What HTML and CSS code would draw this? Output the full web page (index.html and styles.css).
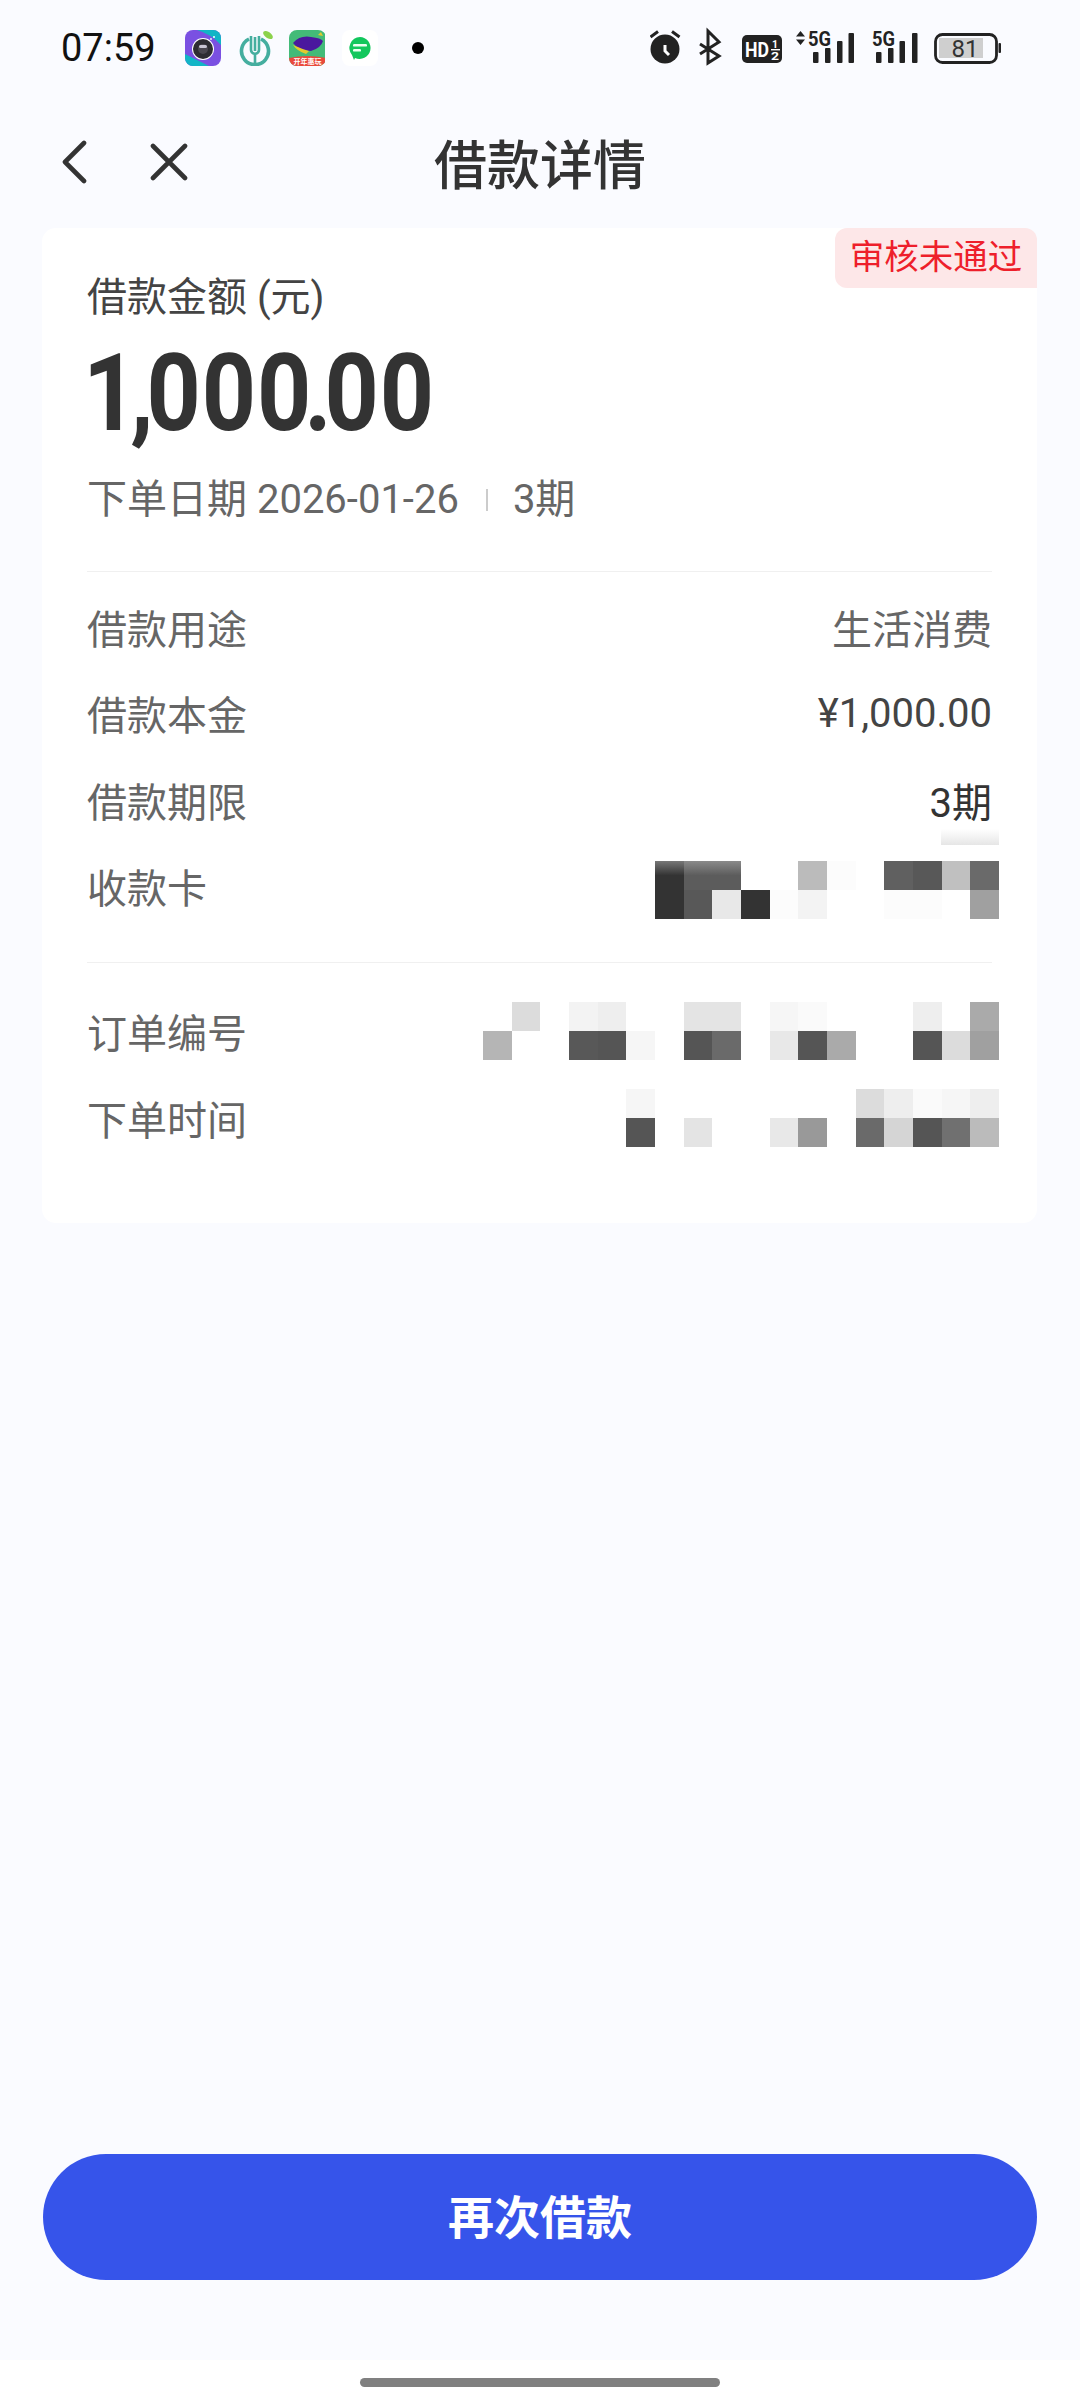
FILE: index.html
```html
<!DOCTYPE html>
<html lang="zh-CN">
<head>
  <meta charset="UTF-8" />
  <meta name="viewport" content="width=device-width, initial-scale=1.0"/>
  <title>借款详情</title>
  <link rel="stylesheet" href="styles.css">
</head>
<body>
  <div class="page">
    <div class="statusbar">
      <span class="time">07:59</span>
      <div class="app-icons">
        <svg class="app" viewBox="0 0 36 36">
          <clipPath id="camClip"><rect width="36" height="36" rx="8"/></clipPath>
          <g clip-path="url(#camClip)">
            <rect width="36" height="36" fill="#7a50e2"/>
            <path d="M12 0H36V15Q26 4 12 0Z" fill="#12b5c6"/>
            <path d="M0 24Q12 30 24 36H0Z" fill="#12b5c6"/>
          </g>
          <circle cx="18" cy="19" r="11" fill="#fff"/>
          <circle cx="18" cy="19" r="10" fill="#2e2d33"/>
          <circle cx="18" cy="19" r="5" fill="#4a4750"/>
          <rect x="14" y="15" width="8" height="3" rx="1.5" fill="#c9c6d4"/>
          <circle cx="29" cy="7" r="1" fill="#fff"/>
          <circle cx="26" cy="9" r="1" fill="#d8f4f8"/>
        </svg>
        <svg class="app app-2" viewBox="0 0 36 36">
          <path d="M11 9A13.5 13.5 0 1 0 23 9" fill="none" stroke="#45ae9f" stroke-width="3.6"/>
          <path d="M13 6V20Q13 23 17 24V35M21 6V20Q21 23 17 24M17 7V21" fill="none" stroke="#45ae9f" stroke-width="2.6"/>
          <ellipse cx="30" cy="5" rx="5.5" ry="3" fill="#8cd24c" transform="rotate(35 30 5)"/>
        </svg>
        <svg class="app app-3" viewBox="0 0 36 36">
          <clipPath id="gameClip"><rect width="37" height="36" rx="8"/></clipPath>
          <g clip-path="url(#gameClip)">
            <rect width="37" height="36" fill="#43bb78"/>
            <path d="M4 13Q11 5 22 7Q32 8 34 11Q32 18 22 21Q10 21 4 13Z" fill="#4a189e"/>
            <path d="M4 15Q13 19 20 21L17 24Q8 21 4 15Z" fill="#e2c92e"/>
            <path d="M29 5L32 2L34 6Z" fill="#e2c92e"/>
            <path d="M0 28Q18 24 37 28V36H0Z" fill="#ea4a3c"/>
            <text class="app-tag" x="18.5" y="33.5" text-anchor="middle" textLength="28" lengthAdjust="spacingAndGlyphs">开年惠玩</text>
          </g>
        </svg>
        <svg class="app app-4" viewBox="0 0 36 36">
          <rect width="36" height="36" rx="8" fill="#fff"/>
          <path d="M18 7A11 11 0 1 1 13 28L12 30L10 25A11 11 0 0 1 18 7Z" fill="#12c75c"/>
          <rect x="11" y="14" width="14" height="2.6" rx="1.2" fill="#e9fff0"/>
          <rect x="11" y="19" width="8" height="2.6" rx="1.2" fill="#e9fff0"/>
        </svg>
      </div>
      <span class="dot"></span>
      <svg class="sys-icons" viewBox="650 24 351 48">
        <circle cx="665" cy="49" r="14.5" fill="#222"/>
        <path d="M650.5 37L658 31.5M672 31.5L679.5 37" stroke="#222" stroke-width="3" fill="none"/>
        <path d="M665 45V51L669 55" stroke="#fff" stroke-width="3" fill="none"/>
        <path d="M700 44L719 56L708 63V31L719 42L700 54" stroke="#222" stroke-width="3" fill="none"/>
        <rect x="742" y="35" width="40" height="28" rx="5" fill="#222"/>
        <text class="sys-bold" x="745" y="57" fill="#fff" font-size="21" textLength="24" lengthAdjust="spacingAndGlyphs">HD</text>
        <text class="sys-bold" x="772" y="48" fill="#fff" font-size="11" textLength="6" lengthAdjust="spacingAndGlyphs">1</text>
        <rect x="771" y="49" width="9" height="1.4" fill="#fff"/>
        <text class="sys-bold" x="771" y="59.5" fill="#fff" font-size="11" textLength="8" lengthAdjust="spacingAndGlyphs">2</text>
        <path d="M796 36.5L800.500 31L805 36.5ZM796 39.500L800.500 45L805 39.500Z" fill="#222"/>
        <text class="sys-bold" x="808" y="46" fill="#222" font-size="21" textLength="23" lengthAdjust="spacingAndGlyphs">5G</text>
        <rect x="813" y="52" width="5.500" height="11" rx="1" fill="#222"/>
        <rect x="825" y="48" width="5.500" height="15" rx="1" fill="#222"/>
        <rect x="837" y="41" width="5.500" height="22" rx="1" fill="#222"/>
        <rect x="848.500" y="33" width="5.500" height="30" rx="1" fill="#222"/>
        <text class="sys-bold" x="872" y="46" fill="#222" font-size="21" textLength="23" lengthAdjust="spacingAndGlyphs">5G</text>
        <rect x="876" y="52" width="5.500" height="11" rx="1" fill="#222"/>
        <rect x="888" y="48" width="5.500" height="15" rx="1" fill="#222"/>
        <rect x="899.500" y="41" width="5.500" height="22" rx="1" fill="#222"/>
        <rect x="912" y="33" width="5.500" height="30" rx="1" fill="#222"/>
        <rect x="939" y="38" width="44" height="20" fill="#cfcfcf"/>
        <rect x="935.500" y="34.500" width="61" height="28" rx="7" fill="none" stroke="#222" stroke-width="2.800"/>
        <rect x="998.500" y="43" width="2.500" height="10" rx="1" fill="#222"/>
        <text class="sys-num" x="965" y="57" text-anchor="middle" fill="#333" font-size="24">81</text>
      </svg>
    </div>

    <div class="topbar">
      <div class="nav-btns">
        <svg class="nav-back" viewBox="0 0 26 44"><path d="M23 3L4 22L23 41" fill="none" stroke="#333" stroke-width="4.600" stroke-linecap="round" stroke-linejoin="round"/></svg>
        <svg class="nav-close" viewBox="0 0 38 38"><path d="M3 3L35 35M35 3L3 35" fill="none" stroke="#333" stroke-width="4.600" stroke-linecap="round"/></svg>
      </div>
      <h1>借款详情</h1>
    </div>

    <div class="card">
      <span class="badge">审核未通过</span>
      <div class="amount-label">借款金额 (元)</div>
      <div class="amount"><span class="tight">1,</span>00<span class="tight">0.</span>00</div>
      <div class="meta">
        <span>下单日期 2026-01-26</span>
        <i class="meta-sep"></i>
        <span>3期</span>
      </div>

      <div class="group group-main">
        <div class="row"><span>借款用途</span><span>生活消费</span></div>
        <div class="row"><span>借款本金</span><span class="dark">¥1,000.00</span></div>
        <div class="row"><span>借款期限</span><span class="darker">3期</span><i class="smear"></i></div>
        <div class="row">
          <span>收款卡</span>
          <div class="mosaic">
            <i></i><i></i><i></i><i></i><i></i><i></i><i class="fade-a"></i><i class="fade-b"></i><i class="fade-b"></i><i></i><i></i><i class="gbb"></i><i class="gfc"></i><i></i><i class="g60"></i><i class="g58"></i><i class="gc0"></i><i class="g6a"></i>
            <i></i><i></i><i></i><i></i><i></i><i></i><i class="g33"></i><i class="g58"></i><i class="ge8"></i><i class="g33"></i><i class="gfc"></i><i class="gf3"></i><i></i><i></i><i class="gfc"></i><i class="gfc"></i><i></i><i class="ga0"></i>
          </div>
        </div>
      </div>

      <div class="group group-order">
        <div class="row">
          <span>订单编号</span>
          <div class="mosaic">
            <i></i><i class="gdc"></i><i></i><i class="gf3"></i><i class="gee"></i><i></i><i></i><i class="ge4"></i><i class="ge4"></i><i></i><i class="gf6"></i><i class="gfa"></i><i></i><i></i><i></i><i class="gee"></i><i></i><i class="gaa"></i>
            <i class="gb5"></i><i></i><i></i><i class="g58"></i><i class="g55"></i><i class="gf6"></i><i></i><i class="g55"></i><i class="g6a"></i><i></i><i class="ge8"></i><i class="g55"></i><i class="gaa"></i><i></i><i></i><i class="g55"></i><i class="gdc"></i><i class="ga0"></i>
          </div>
        </div>
        <div class="row">
          <span>下单时间</span>
          <div class="mosaic">
            <i></i><i></i><i></i><i></i><i></i><i class="gf6"></i><i></i><i></i><i></i><i></i><i></i><i></i><i></i><i class="gdc"></i><i class="gee"></i><i class="gfa"></i><i class="gf6"></i><i class="gee"></i>
            <i></i><i></i><i></i><i></i><i></i><i class="g55"></i><i></i><i class="ge4"></i><i></i><i></i><i class="ge8"></i><i class="g99"></i><i></i><i class="g6a"></i><i class="gd5"></i><i class="g55"></i><i class="g70"></i><i class="gbb"></i>
          </div>
        </div>
      </div>
    </div>

    <div class="footer">
      <button class="again-btn" type="button">再次借款</button>
    </div>

    <div class="navbar"><span class="handle"></span></div>
  </div>
</body>
</html>
```

FILE: styles.css
```css
* {
  box-sizing: border-box;
}

body {
  margin: 0;
  background-color: #fafbff;
  font-family: Roboto, "Noto Sans CJK SC", sans-serif;
  color: #666;
}

.page {
  display: flex;
  flex-direction: column;
  width: 1080px;
  height: 2408px;
  overflow: hidden;
}

/* status bar */
.statusbar {
  display: flex;
  align-items: center;
  height: 96px;
  padding-left: 61px;
  flex-shrink: 0;
}

.time {
  width: 94px;
  font-size: 38px;
  color: #111;
}

.app-icons {
  display: flex;
  margin-left: 30px;
}

.app {
  width: 36px;
  height: 36px;
}

.app-2 {
  margin-left: 17px;
}

.app-3 {
  margin-left: 15px;
}

.app-4 {
  margin-left: 17px;
}

.app-tag {
  font-size: 7px;
  font-weight: 700;
  fill: #fff;
}

.dot {
  width: 12px;
  height: 12px;
  margin-left: 34px;
  border-radius: 50%;
  background-color: #000;
}

.sys-icons {
  width: 351px;
  height: 48px;
  margin-left: auto;
  margin-right: 79px;
}

.sys-bold {
  font-weight: 700;
}

/* title row */
.topbar {
  display: grid;
  grid-template-columns: 1fr auto 1fr;
  align-items: center;
  height: 132px;
  padding: 0 61px;
  flex-shrink: 0;
}

.nav-btns {
  display: flex;
  align-items: center;
}

.nav-back {
  width: 26px;
  height: 44px;
}

.nav-close {
  width: 38px;
  height: 38px;
  margin-left: 63px;
}

h1 {
  margin: 0;
  font-size: 53px;
  font-weight: 500;
  color: #333;
}

/* card */
.card {
  position: relative;
  height: 995px;
  margin: 0 43px 0 42px;
  padding: 42px 45px 0;
  background-color: #fff;
  border-radius: 14px;
  flex-shrink: 0;
}

.badge {
  position: absolute;
  top: 0;
  right: 0;
  width: 202px;
  height: 60px;
  background-color: #fde7e8;
  border-radius: 12px 12px 0 12px;
  color: #ee1f2b;
  font-size: 34.5px;
  line-height: 58px;
  text-align: center;
}

.amount-label {
  font-size: 40px;
  line-height: 56px;
  color: #444;
}

.amount {
  margin-top: 18px;
  margin-bottom: -1px;
  margin-left: -4px;
  font-size: 107px;
  font-weight: 700;
  line-height: 100px;
  color: #333;
  letter-spacing: 1px;
  transform: scaleX(0.885);
  transform-origin: left center;
}

.tight {
  letter-spacing: -8px;
}

.meta {
  display: flex;
  align-items: center;
  margin-top: 29px;
  font-size: 40px;
  line-height: 56px;
  color: #666;
}

.meta-sep {
  width: 2px;
  height: 22px;
  margin: 0 25px 0 27px;
  background-color: #ccc;
}

.group {
  position: relative;
  border-top: 1px solid #f0f0f0;
}

.group-main {
  margin-top: 43px;
  padding-top: 15px;
}

.group-main .row > span {
  margin-bottom: 7px;
}

.group-order {
  margin-top: 29px;
  padding-top: 25px;
}

.row {
  position: relative;
  display: flex;
  justify-content: space-between;
  align-items: center;
  height: 86.5px;
  font-size: 40px;
  color: #666;
}

.dark {
  color: #444;
}

.darker {
  color: #333;
}

.smear {
  position: absolute;
  right: -7px;
  bottom: 2px;
  width: 58px;
  height: 16px;
  background: linear-gradient(to bottom, #fff, #e6e6e6);
}

/* pixelated private values */
.mosaic {
  display: grid;
  grid-template-columns: repeat(18, 1fr);
  grid-template-rows: 29px 29px;
  width: 516px;
  margin-right: -7px;
}

.fade-a { background: linear-gradient(to bottom, #777, #333 50%); }
.fade-b { background: linear-gradient(to bottom, #8a8a8a, #5c5c5c 50%); }
.g33 { background-color: #333; }
.g55 { background-color: #555; }
.g58 { background-color: #585858; }
.g60 { background-color: #606060; }
.g6a { background-color: #6a6a6a; }
.g70 { background-color: #707070; }
.g99 { background-color: #999; }
.ga0 { background-color: #a0a0a0; }
.gaa { background-color: #aaa; }
.gb5 { background-color: #b5b5b5; }
.gbb { background-color: #bbb; }
.gc0 { background-color: #c0c0c0; }
.gd5 { background-color: #d5d5d5; }
.gdc { background-color: #dcdcdc; }
.ge4 { background-color: #e4e4e4; }
.ge8 { background-color: #e8e8e8; }
.gee { background-color: #eee; }
.gf3 { background-color: #f3f3f3; }
.gf6 { background-color: #f6f6f6; }
.gfa { background-color: #fafafa; }
.gfc { background-color: #fcfcfc; }

/* bottom button */
.footer {
  flex: 1;
  display: flex;
  align-items: flex-end;
  padding: 0 43px 80px 43px;
}

.again-btn {
  width: 100%;
  height: 126px;
  padding: 0 0 6px;
  border: none;
  border-radius: 63px;
  background-color: #3654ea;
  color: #fff;
  font-family: inherit;
  font-size: 46px;
  font-weight: 700;
  cursor: pointer;
}

.navbar {
  display: flex;
  justify-content: center;
  height: 48px;
  padding-top: 18px;
  background-color: #fff;
  flex-shrink: 0;
}

.handle {
  width: 360px;
  height: 9px;
  border-radius: 5px;
  background-color: #808080;
}
```
